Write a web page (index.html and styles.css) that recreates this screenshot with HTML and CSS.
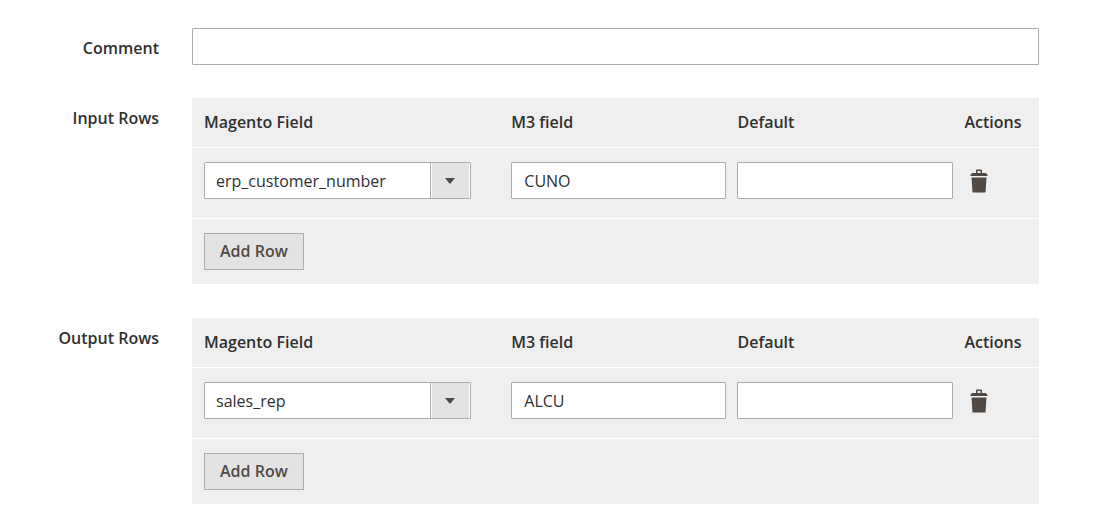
FILE: index.html
```html
<!DOCTYPE html>
<html lang="en">
<head>
<meta charset="utf-8">
<meta name="viewport" content="width=device-width, initial-scale=1">
<title>Field mapping</title>
<link rel="stylesheet" href="styles.css">
</head>
<body>
<form class="form">
  <div class="field">
    <label class="field-label" for="comment">Comment</label>
    <input class="text-input" id="comment" type="text">
  </div>

  <div class="field mapping" role="group" aria-labelledby="input-rows">
    <span class="field-label" id="input-rows">Input Rows</span>
    <table class="rows">
      <thead>
        <tr><th class="col-field">Magento Field</th><th class="col-m3">M3 field</th><th class="col-default">Default</th><th>Actions</th></tr>
      </thead>
      <tbody>
        <tr>
          <td><div class="select-wrap"><select class="select" aria-label="Magento Field"><option>erp_customer_number</option></select></div></td>
          <td><input class="text-input" type="text" value="CUNO" aria-label="M3 field"></td>
          <td><input class="text-input" type="text" aria-label="Default"></td>
          <td><button class="delete" type="button" aria-label="Delete"><svg class="trash" viewBox="0 0 18 24" aria-hidden="true"><path fill-rule="evenodd" d="M6 4V1.5Q6 .5 7 .5h4q1 0 1 1V4h3q2 0 2.5 2v1H.5V6Q1 4 3 4zM7.5 4h3V2h-3zM1.5 8.5h15l-1 15h-13z"/></svg></button></td>
        </tr>
      </tbody>
      <tfoot>
        <tr><td colspan="4"><button class="add" type="button">Add Row</button></td></tr>
      </tfoot>
    </table>
  </div>

  <div class="field mapping" role="group" aria-labelledby="output-rows">
    <span class="field-label" id="output-rows">Output Rows</span>
    <table class="rows">
      <thead>
        <tr><th class="col-field">Magento Field</th><th class="col-m3">M3 field</th><th class="col-default">Default</th><th>Actions</th></tr>
      </thead>
      <tbody>
        <tr>
          <td><div class="select-wrap"><select class="select" aria-label="Magento Field"><option>sales_rep</option></select></div></td>
          <td><input class="text-input" type="text" value="ALCU" aria-label="M3 field"></td>
          <td><input class="text-input" type="text" aria-label="Default"></td>
          <td><button class="delete" type="button" aria-label="Delete"><svg class="trash" viewBox="0 0 18 24" aria-hidden="true"><path fill-rule="evenodd" d="M6 4V1.5Q6 .5 7 .5h4q1 0 1 1V4h3q2 0 2.5 2v1H.5V6Q1 4 3 4zM7.5 4h3V2h-3zM1.5 8.5h15l-1 15h-13z"/></svg></button></td>
        </tr>
      </tbody>
      <tfoot>
        <tr><td colspan="4"><button class="add" type="button">Add Row</button></td></tr>
      </tfoot>
    </table>
  </div>
</form>
</body>
</html>
```

FILE: styles.css
```css
* { box-sizing: border-box; }

body {
  margin: 0;
  background: #fff;
  color: #303030;
  font: 400 16px/22px "Open Sans", "Noto Sans", sans-serif;
}

.form {
  display: grid;
  gap: 33px;
  padding: 28px 60px 24px 0;
}

.field {
  display: grid;
  grid-template-columns: 159px minmax(0, 1fr);
  column-gap: 33px;
  align-items: start;
}

.mapping + .mapping { margin-top: 1px; }

.field-label {
  padding-top: 9px;
  text-align: right;
  font-weight: 600;
}

.text-input,
.select {
  display: block;
  width: 100%;
  height: 37px;
  margin: 0;
  padding: 0 12px;
  border: 1px solid #adadad;
  border-radius: 1px;
  background: #fff;
  color: #303030;
  font: inherit;
}

.rows {
  width: 100%;
  table-layout: fixed;
  border-collapse: separate;
  border-spacing: 0;
  background: #efefef;
}

.rows th,
.rows td {
  padding: 14px 0 18px 11px;
  text-align: left;
  vertical-align: top;
}

.rows th {
  padding-top: 13px;
  padding-bottom: 14px;
  font-weight: 600;
}

.rows tr > :first-child { padding-left: 12px; }
.rows tbody td,
.rows tfoot td { border-top: 1px solid #fff; }
.rows tfoot td { padding-bottom: 14px; }

.col-field { width: 36.4%; }
.col-m3 { width: 26.7%; }
.col-default { width: 26.8%; }

.select-wrap {
  position: relative;
  margin-right: 29px;
}

.select {
  padding: 0 48px 0 11px;
  appearance: none;
}

.select-wrap::before {
  content: "";
  position: absolute;
  top: 1px;
  right: 2px;
  bottom: 1px;
  width: 38px;
  border-left: 1px solid #adadad;
  background: #e3e3e3;
  box-shadow: inset 1px 0 #fff;
  pointer-events: none;
}

.select-wrap::after {
  content: "";
  position: absolute;
  top: 16px;
  right: 16px;
  border: solid transparent;
  border-width: 6px 5px 0;
  border-top-color: #514943;
  pointer-events: none;
}

.delete {
  display: block;
  margin: 0;
  padding: 7px 6px;
  border: 0;
  background: transparent;
}

.trash {
  display: block;
  width: 18px;
  height: 24px;
  fill: #514943;
}

.add {
  display: block;
  height: 37px;
  margin: 0;
  padding: 0 15px 2px;
  border: 1px solid #adadad;
  background: #e3e3e3;
  color: #514943;
  font: inherit;
  font-weight: 600;
}
```
